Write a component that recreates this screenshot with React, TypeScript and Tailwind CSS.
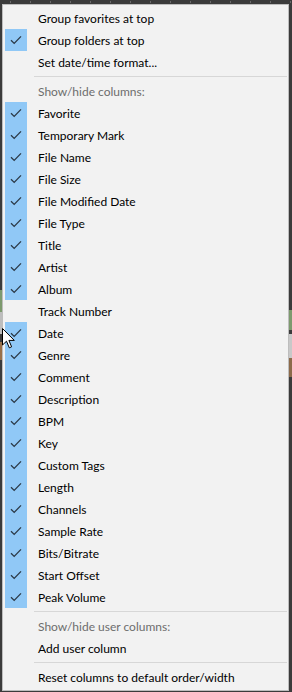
import React from "react";

type Item =
  | { kind: "item"; label: string; checked?: boolean; disabled?: boolean }
  | { kind: "sep" };

const columns: [string, boolean][] = [
  ["Favorite", true],
  ["Temporary Mark", true],
  ["File Name", true],
  ["File Size", true],
  ["File Modified Date", true],
  ["File Type", true],
  ["Title", true],
  ["Artist", true],
  ["Album", true],
  ["Track Number", false],
  ["Date", true],
  ["Genre", true],
  ["Comment", true],
  ["Description", true],
  ["BPM", true],
  ["Key", true],
  ["Custom Tags", true],
  ["Length", true],
  ["Channels", true],
  ["Sample Rate", true],
  ["Bits/Bitrate", true],
  ["Start Offset", true],
  ["Peak Volume", true],
];

const items: Item[] = [
  { kind: "item", label: "Group favorites at top" },
  { kind: "item", label: "Group folders at top", checked: true },
  { kind: "item", label: "Set date/time format..." },
  { kind: "sep" },
  { kind: "item", label: "Show/hide columns:", disabled: true },
  ...columns.map(([label, checked]) => ({ kind: "item" as const, label, checked })),
  { kind: "sep" },
  { kind: "item", label: "Show/hide user columns:", disabled: true },
  { kind: "item", label: "Add user column" },
  { kind: "sep" },
  { kind: "item", label: "Reset columns to default order/width" },
];

function Check() {
  return (
    <svg width="12" height="10" viewBox="0 0 12 10" fill="none">
      <path d="M1 5.2 L4.2 8.4 L11 1.4" stroke="#2b3946" strokeWidth="1.3" />
    </svg>
  );
}

function MenuRow({ item }: { item: Item }) {
  if (item.kind === "sep") {
    return (
      <div className="flex h-[7px] items-center pl-[31px] pr-[1px]">
        <div className="h-px w-full bg-[#d7d7d7]" />
      </div>
    );
  }
  return (
    <div className="flex h-[22px] items-center gap-[11px] pl-[2px]">
      <div
        className={
          "flex h-[22px] w-[22px] items-center justify-center " +
          (item.checked ? "bg-[#90c8f6]" : "")
        }
      >
        {item.checked && <Check />}
      </div>
      <span
        className={
          "whitespace-nowrap pt-[2px] text-[12px] leading-none " +
          (item.disabled ? "text-[#6d6d6d]" : "text-black")
        }
      >
        {item.label}
      </span>
    </div>
  );
}

function Cursor() {
  return (
    <svg
      className="absolute left-[2px] top-[328px]"
      width="14"
      height="22"
      viewBox="0 0 14 22"
    >
      <path
        d="M0.5 0.5 L0.5 17 L4.5 13.2 L7.3 19.8 L9.6 18.8 L6.9 12.4 L12.3 12.4 Z"
        fill="#fff"
        stroke="#000"
        strokeWidth="1"
      />
    </svg>
  );
}

export default function App() {
  const dots = Array.from({ length: 15 }, (_, i) => i);
  return (
    <div
      className="relative flex h-[692px] w-[292px] flex-col overflow-hidden bg-[#3b3b3b]"
      style={{ fontFamily: 'Lato, "Noto Sans", sans-serif' }}
    >
      {/* strip of the window behind, above the menu */}
      <div className="flex h-[4px] shrink-0 items-start gap-[19px] pl-[10px] pt-[1px]">
        {dots.map((i) => (
          <div key={i} className="h-[2px] w-px bg-[#6a6a6a]" />
        ))}
      </div>

      <div className="flex items-start">
        {/* list behind, left edge */}
        <div className="flex w-[2px] shrink-0 flex-col pt-[286px]">
          <div className="h-[22px] bg-[#7d9a6e]" />
          <div className="h-[22px] bg-[#bdbdbd]" />
          <div className="h-[8px]" />
          <div className="h-[18px] bg-[#9a7048]" />
        </div>

        <div className="w-[287px] shrink-0 border border-[#bdbdbd] bg-[#f2f2f2] py-[2px]">
          {items.map((item, i) => (
            <MenuRow key={i} item={item} />
          ))}
        </div>

        {/* list behind, right edge */}
        <div className="flex flex-1 flex-col pt-[306px]">
          <div className="h-[20px] bg-[#7d9a6e]" />
          <div className="h-[4px]" />
          <div className="h-[24px] bg-[#c8c8c8]" />
          <div className="h-[19px] bg-[#8c6a4a]" />
        </div>
      </div>

      <Cursor />
    </div>
  );
}
